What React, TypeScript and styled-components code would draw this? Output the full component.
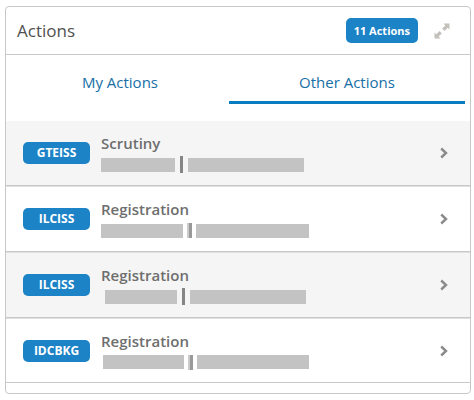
import React, { useState } from "react";
import styled, { createGlobalStyle } from "styled-components";

const GlobalStyle = createGlobalStyle`
  *, *::before, *::after { box-sizing: border-box; }
  body {
    margin: 0;
    background: #fff;
    font-family: "Open Sans", "Noto Sans", sans-serif;
  }
  button { font: inherit; border: 0; padding: 0; background: none; cursor: pointer; }
`;

const Card = styled.section`
  margin: 6px 3px 6px 5px;
  padding-bottom: 10px;
  border: 1px solid #c8c8c8;
  border-radius: 4px;
  background: #fff;
`;

const Header = styled.header`
  display: flex;
  align-items: center;
  height: 48px;
  padding: 0 20px 0 11px;
  border-bottom: 1px solid #c8c8c8;
`;

const Title = styled.h1`
  flex: 1;
  margin: 0;
  font-size: 17px;
  line-height: 24px;
  font-weight: 400;
  color: #505050;
`;

const Count = styled.span`
  padding: 0 8px;
  border-radius: 5px;
  background: #1c83c7;
  color: #fff;
  font-size: 11px;
  line-height: 25px;
  font-weight: 700;
`;

const ExpandButton = styled.button`
  display: flex;
  margin-left: 16px;
`;

const Tabs = styled.div`
  display: grid;
  grid-template-columns: 12fr 13fr;
  padding: 0 5px;
  margin-bottom: 17px;
`;

const Tab = styled.button<{ $active: boolean }>`
  height: 49px;
  padding-top: 8px;
  border-bottom: 3px solid ${(p) => (p.$active ? "#087bc1" : "transparent")};
  color: #176fa6;
  font-size: 15px;
  line-height: 24px;
`;

const List = styled.ul`
  margin: 0;
  padding: 0;
  list-style: none;
`;

const Item = styled.li`
  border-bottom: 1px solid #c8c8c8;
  &:nth-child(odd) { background: #f5f5f5; }
  &:not(:first-child) { border-top: 1px solid #e0e0e0; }
`;

const RowButton = styled.button`
  display: flex;
  align-items: center;
  width: 100%;
  height: 64px;
  padding: 0 22px 0 17px;
  text-align: left;

  ${Item}:last-child & { height: 63px; }
`;

const Code = styled.span`
  flex: none;
  width: 67px;
  border-radius: 5px;
  background: #1c83c7;
  color: #fff;
  font-size: 12px;
  line-height: 22px;
  font-weight: 700;
  text-align: center;
`;

const Details = styled.span`
  flex: 1;
  min-width: 0;
  margin-left: 11px;
`;

const Name = styled.span`
  display: block;
  margin-bottom: 2px;
  font-size: 15px;
  line-height: 21px;
  font-weight: 600;
  color: #6e6e6e;
`;

const Meta = styled.span<{ $indent: number; $gap: number }>`
  display: flex;
  align-items: center;
  gap: ${(p) => p.$gap}px;
  height: 17px;
  padding-left: ${(p) => p.$indent}px;
`;

const Mask = styled.span<{ $width: number }>`
  width: ${(p) => p.$width}px;
  height: 14px;
  background: #c3c3c3;
`;

const Divider = styled.span<{ $soft: boolean }>`
  width: ${(p) => (p.$soft ? 5 : 3)}px;
  height: ${(p) => (p.$soft ? 15 : 17)}px;
  background: ${(p) => (p.$soft ? "#999" : "#858585")};
  border-left: ${(p) => (p.$soft ? "2px solid #cbcbcb" : "0")};
`;

const ExpandIcon = () => (
  <svg width="16" height="16" viewBox="0 0 16 16" fill="#c4c1bb" aria-hidden="true">
    <path d="M9.5 0.5h6V6.500l-1.800-1.800-3.200 3.200-2.300-2.300 3.200-3.200z" />
    <path d="M6.500 15.500h-6v-6l1.800 1.800 3.200-3.200 2.300 2.300-3.200 3.200z" />
  </svg>
);

const ChevronIcon = () => (
  <svg width="8" height="12" viewBox="0 0 8 12" fill="none" stroke="#8a8a8a" strokeWidth="2.4" aria-hidden="true">
    <path d="M1.200 1.500 6 6 1.200 10.500" />
  </svg>
);

const rows = [
  { code: "GTEISS", name: "Scrutiny", indent: 0, first: 74, second: 116, soft: false },
  { code: "ILCISS", name: "Registration", indent: 0, first: 82, second: 113, soft: true },
  { code: "ILCISS", name: "Registration", indent: 4, first: 72, second: 116, soft: false },
  { code: "IDCBKG", name: "Registration", indent: 2, first: 81, second: 112, soft: true },
];

const tabs = ["My Actions", "Other Actions"];

export default function App() {
  const [active, setActive] = useState(1);
  return (
    <>
      <GlobalStyle />
      <Card>
        <Header>
          <Title>Actions</Title>
          <Count>11 Actions</Count>
          <ExpandButton aria-label="Expand">
            <ExpandIcon />
          </ExpandButton>
        </Header>
        <Tabs role="tablist">
          {tabs.map((label, i) => (
            <Tab key={label} role="tab" aria-selected={i === active} $active={i === active} onClick={() => setActive(i)}>
              {label}
            </Tab>
          ))}
        </Tabs>
        <List>
          {rows.map((row, i) => (
            <Item key={i}>
              <RowButton>
                <Code>{row.code}</Code>
                <Details>
                  <Name>{row.name}</Name>
                  <Meta $indent={row.indent} $gap={row.soft ? 4 : 5}>
                    <Mask $width={row.first} />
                    <Divider $soft={row.soft} />
                    <Mask $width={row.second} />
                  </Meta>
                </Details>
                <ChevronIcon />
              </RowButton>
            </Item>
          ))}
        </List>
      </Card>
    </>
  );
}
